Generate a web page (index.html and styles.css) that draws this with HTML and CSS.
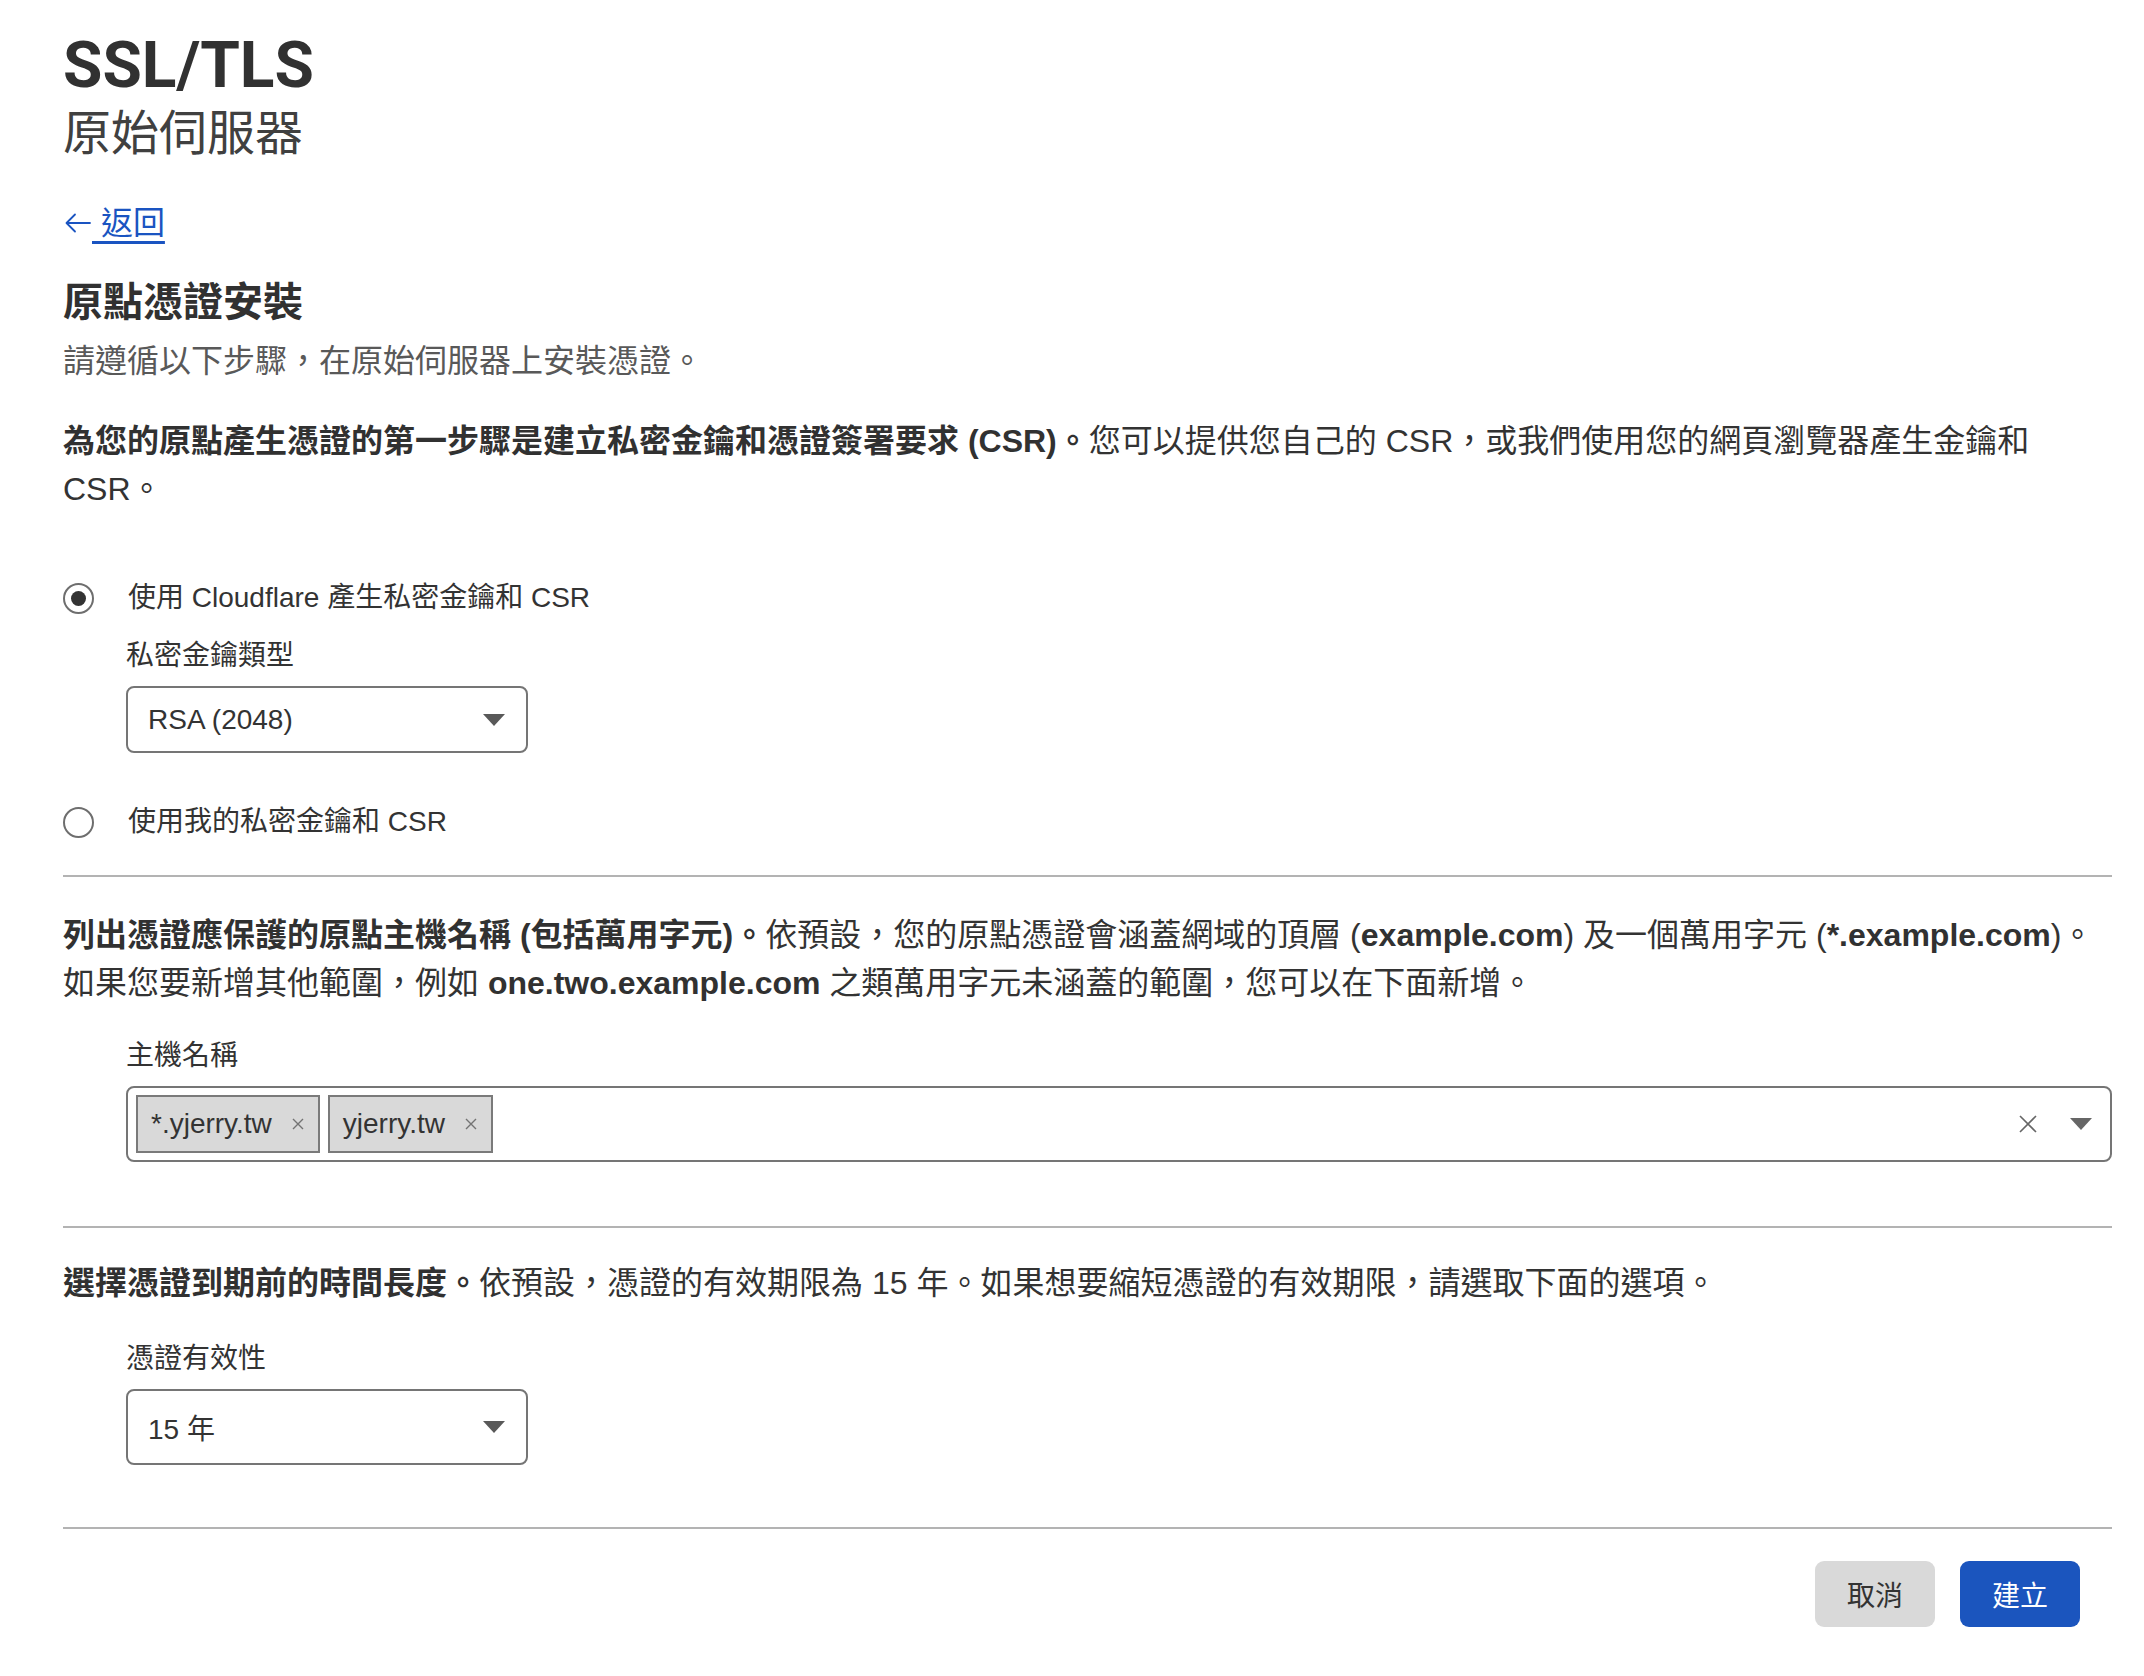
FILE: index.html
```html
<!DOCTYPE html>
<html lang="zh-Hant">
<head>
<meta charset="utf-8">
<title>SSL/TLS 原始伺服器</title>
<link rel="stylesheet" href="styles.css">
</head>
<body>
<main class="page">
  <header class="page-head">
    <h1 class="title">SSL/TLS</h1>
    <div class="subtitle">原始伺服器</div>
  </header>

  <a class="back" href="#">
    <svg class="back-arrow" width="28" height="24" viewBox="0 0 28 24" aria-hidden="true"><path d="M26 12H3M11 3.5L2.5 12L11 20.5" fill="none" stroke="#1a54c1" stroke-width="1.8" stroke-linecap="round" stroke-linejoin="round"/></svg><span class="back-text">&nbsp;返回</span>
  </a>

  <section class="intro">
    <h2 class="section-title">原點憑證安裝</h2>
    <p class="lead">請遵循以下步驟，在原始伺服器上安裝憑證。</p>
  </section>

  <section class="block block-key">
    <p class="desc"><strong>為您的原點產生憑證的第一步驟是建立私密金鑰和憑證簽署要求 (CSR)。</strong>您可以提供您自己的 CSR，或我們使用您的網頁瀏覽器產生金鑰和 CSR。</p>

    <div class="radio-row radio-first">
      <span class="radio checked"></span>
      <span class="radio-label">使用 Cloudflare 產生私密金鑰和 CSR</span>
    </div>
    <div class="field">
      <div class="field-label">私密金鑰類型</div>
      <div class="select select-key">
        <span class="select-value">RSA (2048)</span>
        <svg class="caret" width="22" height="12" viewBox="0 0 22 12" aria-hidden="true"><path d="M0 0H22L11 12Z" fill="#595959"/></svg>
      </div>
    </div>
    <div class="radio-row radio-second">
      <span class="radio"></span>
      <span class="radio-label">使用我的私密金鑰和 CSR</span>
    </div>
  </section>

  <hr class="divider">

  <section class="block">
    <p class="desc"><strong>列出憑證應保護的原點主機名稱 (包括萬用字元)。</strong>依預設，您的原點憑證會涵蓋網域的頂層 (<strong>example.com</strong>) 及一個萬用字元 (<strong>*.example.com</strong>)。如果您要新增其他範圍，例如 <strong>one.two.example.com</strong> 之類萬用字元未涵蓋的範圍，您可以在下面新增。</p>
    <div class="field field-hosts">
      <div class="field-label">主機名稱</div>
      <div class="multi">
        <div class="tags">
          <span class="tag">*.yjerry.tw<svg class="tag-x" width="12" height="12" viewBox="0 0 12 12" aria-hidden="true"><path d="M1 1L11 11M11 1L1 11" stroke="#737373" stroke-width="1.4"/></svg></span>
          <span class="tag">yjerry.tw<svg class="tag-x" width="12" height="12" viewBox="0 0 12 12" aria-hidden="true"><path d="M1 1L11 11M11 1L1 11" stroke="#737373" stroke-width="1.4"/></svg></span>
        </div>
        <svg class="clear-x" width="20" height="20" viewBox="0 0 20 20" aria-hidden="true"><path d="M2 2L18 18M18 2L2 18" stroke="#666" stroke-width="1.6"/></svg>
        <svg class="caret" width="22" height="12" viewBox="0 0 22 12" aria-hidden="true"><path d="M0 0H22L11 12Z" fill="#666"/></svg>
      </div>
    </div>
  </section>

  <hr class="divider divider-2">

  <section class="block block-validity">
    <p class="desc"><strong>選擇憑證到期前的時間長度。</strong>依預設，憑證的有效期限為 15 年。如果想要縮短憑證的有效期限，請選取下面的選項。</p>
    <div class="field field-validity">
      <div class="field-label">憑證有效性</div>
      <div class="select select-validity">
        <span class="select-value">15 年</span>
        <svg class="caret" width="22" height="12" viewBox="0 0 22 12" aria-hidden="true"><path d="M0 0H22L11 12Z" fill="#595959"/></svg>
      </div>
    </div>
  </section>

  <hr class="divider divider-3">

  <div class="actions">
    <button class="btn btn-cancel" type="button">取消</button>
    <button class="btn btn-primary" type="button">建立</button>
  </div>
</main>
</body>
</html>
```

FILE: styles.css
```css
* { box-sizing: border-box; }

html, body {
  margin: 0;
  padding: 0;
  background: #ffffff;
}

body {
  font-family: "Liberation Sans", "Noto Sans CJK TC", sans-serif;
  color: #333333;
}

.page {
  width: 2112px;
  padding-left: 63px;
}

.page-head {
  padding-top: 28px;
}

.title {
  margin: 0;
  font-family: Roboto, "Noto Sans CJK TC", sans-serif;
  font-size: 64px;
  line-height: 76px;
  font-weight: 700;
  color: #313131;
}

.subtitle {
  margin-top: 1px;
  font-size: 48px;
  line-height: 58px;
  font-weight: 400;
  color: #404040;
}

.back {
  display: inline-flex;
  align-items: center;
  margin-top: 40px;
  font-size: 32px;
  line-height: 40px;
  color: #1a54c1;
  text-decoration: none;
}

.back-arrow {
  display: block;
  margin-left: 1px;
}

.back-text {
  text-decoration: underline;
  text-decoration-thickness: 3px;
  text-underline-offset: 7px;
}

.intro {
  margin-top: 35px;
}

.section-title {
  margin: 0;
  font-size: 40px;
  line-height: 48px;
  font-weight: 700;
  color: #313131;
}

.lead {
  margin: 13px 0 0;
  font-size: 32px;
  line-height: 44px;
  color: #595959;
}

.block {
  margin-top: 34px;
}

.block-validity {
  margin-top: 31px;
}

.desc {
  margin: 0;
  font-size: 32px;
  line-height: 48px;
  color: #333333;
}

.desc strong {
  font-weight: 700;
  color: #313131;
}

.radio-row {
  display: flex;
  align-items: center;
  height: 40px;
}

.radio-first {
  margin-top: 65px;
}

.radio-second {
  margin-top: 49px;
}

.radio {
  width: 31px;
  height: 31px;
  border: 2px solid #6e6e6e;
  border-radius: 50%;
  display: flex;
  align-items: center;
  justify-content: center;
  flex: none;
}

.radio.checked::after {
  content: "";
  width: 15px;
  height: 15px;
  border-radius: 50%;
  background: #333333;
}

.radio-label {
  margin-left: 34px;
  font-size: 28px;
  line-height: 40px;
  color: #333333;
}

.field {
  margin-left: 63px;
}

.block-key .field {
  margin-top: 20px;
}

.field-hosts {
  margin-top: 31px;
}

.field-validity {
  margin-top: 34px;
}

.field-label {
  font-size: 28px;
  line-height: 36px;
  color: #333333;
}

.select {
  margin-top: 12px;
  width: 402px;
  border: 2px solid #757575;
  border-radius: 8px;
  display: flex;
  align-items: center;
  justify-content: space-between;
  padding: 0 21px 0 20px;
  font-size: 28px;
  color: #333333;
}

.select-key { height: 67px; }
.select-validity { height: 76px; }

.select .caret {
  display: block;
}

.divider {
  margin: 33px 0 0;
  border: 0;
  height: 2px;
  background: #b3b3b3;
}

.divider-2 { margin-top: 64px; }
.divider-3 { margin-top: 62px; }

.multi {
  margin-top: 12px;
  height: 76px;
  border: 2px solid #757575;
  border-radius: 8px;
  display: flex;
  align-items: center;
  padding: 0 18px 0 8px;
}

.tags {
  display: flex;
  gap: 8px;
  flex: 1;
}

.tag {
  display: inline-flex;
  align-items: center;
  height: 58px;
  padding: 0 14px 0 13px;
  background: #d9d9d9;
  border: 2px solid #7a7a7a;
  font-size: 28px;
  color: #333333;
}

.tag-x {
  margin-left: 20px;
  display: block;
}

.clear-x {
  display: block;
  margin-right: 32px;
}

.multi .caret { display: block; }

.actions {
  display: flex;
  justify-content: flex-end;
  gap: 25px;
  margin-top: 32px;
  padding-right: 32px;
}

.btn {
  height: 66px;
  padding: 0 32px;
  border: 0;
  border-radius: 9px;
  font-family: "Liberation Sans", "Noto Sans CJK TC", sans-serif;
  font-size: 28px;
  cursor: pointer;
}

.btn-cancel {
  background: #d9d9d9;
  color: #333333;
}

.btn-primary {
  background: #1b55be;
  color: #ffffff;
}
```
